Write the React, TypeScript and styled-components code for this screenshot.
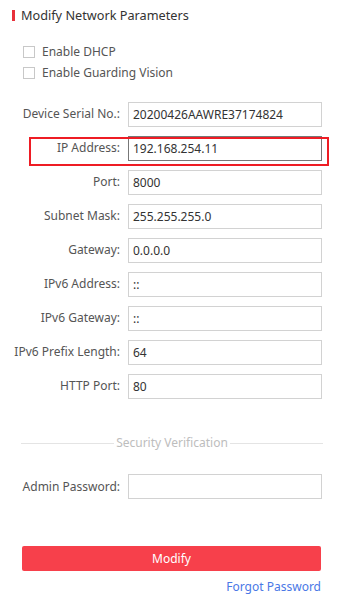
import React from "react";
import styled, { createGlobalStyle } from "styled-components";

const GlobalStyle = createGlobalStyle`
  html, body {
    margin: 0;
    padding: 0;
    background: #fff;
  }
  body {
    font-family: "Noto Sans", "Open Sans", Arial, sans-serif;
  }
`;

const fields: { label: string; value: string; highlight?: boolean }[] = [
  { label: "Device Serial No.:", value: "20200426AAWRE37174824" },
  { label: "IP Address:", value: "192.168.254.11", highlight: true },
  { label: "Port:", value: "8000" },
  { label: "Subnet Mask:", value: "255.255.255.0" },
  { label: "Gateway:", value: "0.0.0.0" },
  { label: "IPv6 Address:", value: "::" },
  { label: "IPv6 Gateway:", value: "::" },
  { label: "IPv6 Prefix Length:", value: "64" },
  { label: "HTTP Port:", value: "80" }
];

const App: React.FC = () => {
  return (
    <Page>
      <GlobalStyle />
      <Header>
        <Bar />
        <Title>Modify Network Parameters</Title>
      </Header>

      <Checks>
        <CheckRow>
          <Box />
          <span>Enable DHCP</span>
        </CheckRow>
        <CheckRow>
          <Box />
          <span>Enable Guarding Vision</span>
        </CheckRow>
      </Checks>

      <Form>
        {fields.map(f => (
          <Row key={f.label}>
            <Label>{f.label}</Label>
            <Input focused={f.highlight}>{f.value}</Input>
            {f.highlight && <Mark />}
          </Row>
        ))}
      </Form>

      <Divider>
        <Line />
        <DividerText>Security Verification</DividerText>
        <Line />
      </Divider>

      <AdminRow>
        <AdminLabel>Admin Password:</AdminLabel>
        <Input />
      </AdminRow>

      <Button>Modify</Button>

      <Footer>
        <Forgot>Forgot Password</Forgot>
      </Footer>
    </Page>
  );
};

export default App;

const Page = styled.div`
  width: 350px;
  height: 600px;
  box-sizing: border-box;
  padding-top: 9px;
  overflow: hidden;
`;

const Header = styled.div`
  display: flex;
  align-items: center;
  gap: 6px;
  padding-left: 12px;
  height: 12px;
`;

const Bar = styled.div`
  width: 3px;
  height: 11px;
  background: #e8313b;
`;

const Title = styled.div`
  font-size: 12.7px;
  color: #333;
  line-height: 12px;
`;

const Checks = styled.div`
  margin-top: 20px;
  padding-left: 23px;
`;

const CheckRow = styled.div`
  display: flex;
  align-items: center;
  gap: 7px;
  height: 21px;
  font-size: 12px;
  color: #555;
`;

const Box = styled.div`
  width: 10px;
  height: 10px;
  border: 1px solid #c8c8c8;
  background: #fff;
`;

const Form = styled.div`
  margin-top: 19px;
  display: flex;
  flex-direction: column;
  gap: 9px;
`;

const Row = styled.div`
  position: relative;
  display: grid;
  grid-template-columns: 120px 194px;
  column-gap: 8px;
  align-items: center;
  height: 25px;
`;

const Label = styled.div`
  text-align: right;
  font-size: 12px;
  color: #555;
  white-space: nowrap;
  margin-top: -3px;
`;

const Input = styled.div<{ focused?: boolean }>`
  box-sizing: border-box;
  height: 25px;
  border: 1px solid ${p => (p.focused ? "#777" : "#d2d2d2")};
  background: #fff;
  padding: 0 4px;
  font-size: 12px;
  color: #333;
  line-height: 23px;
  white-space: nowrap;
`;

const Mark = styled.div`
  position: absolute;
  left: 29px;
  top: 1px;
  width: 300px;
  height: 29px;
  box-sizing: border-box;
  border: 2px solid #ee1c24;
  pointer-events: none;
`;

const Divider = styled.div`
  margin-top: 36px;
  margin-left: 21px;
  width: 302px;
  display: flex;
  align-items: center;
  gap: 2px;
`;

const Line = styled.div`
  flex: 1;
  height: 1px;
  background: #e4e4e4;
`;

const DividerText = styled.div`
  font-size: 12px;
  color: #bdbdbd;
  line-height: 16px;
`;

const AdminRow = styled.div`
  margin-top: 23px;
  display: grid;
  grid-template-columns: 120px 194px;
  column-gap: 8px;
  align-items: center;
  height: 25px;
`;

const AdminLabel = styled(Label)`
  margin-top: 0;
`;

const Button = styled.div`
  margin: 47px 0 0 22px;
  width: 299px;
  height: 25px;
  border-radius: 2px;
  background: #f7404b;
  color: #fff;
  font-size: 12px;
  line-height: 25px;
  text-align: center;
`;

const Footer = styled.div`
  display: flex;
  justify-content: flex-end;
  width: 321px;
  margin-top: 7px;
`;

const Forgot = styled.div`
  font-size: 12px;
  color: #4a78e6;
  line-height: 18px;
`;
